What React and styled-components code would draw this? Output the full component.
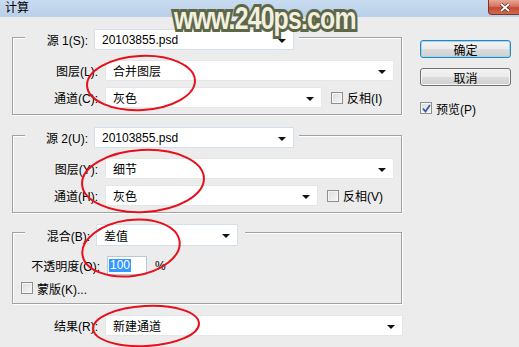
import styled, { createGlobalStyle } from 'styled-components';

const GlobalStyle = createGlobalStyle`
  html, body {
    margin: 0;
    padding: 0;
    background: #ececec;
  }
  body {
    font-family: "Liberation Sans", "Noto Sans CJK SC", sans-serif;
    font-size: 12px;
    color: #000;
  }
`;

const Window = styled.div`
  position: relative;
  width: 519px;
  height: 347px;
  overflow: hidden;
  background: #ececec;
`;

const TitleBar = styled.div`
  height: 17px;
  display: flex;
  align-items: flex-start;
  justify-content: space-between;
  background: linear-gradient(#c8dbf0, #b9cfe8);
`;

const Title = styled.div`
  padding-left: 5px;
  line-height: 17px;
  font-size: 12px;
`;

const CloseButton = styled.div`
  width: 31px;
  height: 14px;
  margin-right: -2px;
  display: flex;
  align-items: center;
  justify-content: center;
  border: 1px solid #7a3526;
  border-top: none;
  border-radius: 0 0 4px 4px;
  background: linear-gradient(#e7a793 0%, #d57461 45%, #c24a32 55%, #d06a4f 100%);
`;

const Body = styled.div`
  display: flex;
  align-items: flex-start;
  padding-left: 12px;
  gap: 17px;
`;

const LeftColumn = styled.div`
  width: 391px;
  padding-top: 20px;
  display: flex;
  flex-direction: column;
`;

const Group = styled.div`
  width: 390px;
  box-sizing: border-box;
  margin-top: ${(p) => p.$mt || 0}px;
  padding: 0 7px ${(p) => p.$pb || 6}px 0;
  border: 1px solid #a2a2a2;
  box-shadow: 1px 1px 0 #fff, inset 1px 1px 0 #fff;
  display: flex;
  flex-direction: column;
`;

const GroupHeader = styled.div`
  align-self: flex-start;
  display: flex;
  align-items: center;
  margin: -9px 0 0 12px;
  padding-right: ${(p) => p.$pr || 5}px;
  background: #ececec;
`;

const HeaderLabel = styled.span`
  width: ${(p) => p.$w}px;
  margin-right: 6px;
  text-align: right;
  white-space: nowrap;
`;

const Row = styled.div`
  display: flex;
  align-items: center;
  height: ${(p) => p.$h || 21}px;
  margin-top: ${(p) => p.$mt || 0}px;
  padding-left: ${(p) => p.$pl || 0}px;
`;

const RowLabel = styled.span`
  width: ${(p) => p.$w || 85}px;
  margin-right: 7px;
  flex-shrink: 0;
  text-align: right;
  white-space: nowrap;
`;

const SelectBox = styled.div`
  box-sizing: border-box;
  height: ${(p) => p.$h || 21}px;
  width: ${(p) => (p.$w ? `${p.$w}px` : 'auto')};
  flex: ${(p) => (p.$w ? '0 0 auto' : '1')};
  display: flex;
  align-items: center;
  justify-content: space-between;
  padding: 0 7px;
  background: #fff;
  border: 1px solid ${(p) => (p.$blue ? '#d3dfec' : '#e4e6e8')};
  border-radius: 1px;
`;

const Arrow = styled.span`
  width: 0;
  height: 0;
  margin-top: 2px;
  border-left: 4px solid transparent;
  border-right: 4px solid transparent;
  border-top: 4px solid #111;
`;

const CheckWrap = styled.label`
  display: flex;
  align-items: center;
  gap: 4px;
  margin-left: ${(p) => p.$ml || 0}px;
  white-space: nowrap;
`;

const Box = styled.span`
  box-sizing: border-box;
  width: 12px;
  height: 12px;
  display: flex;
  align-items: center;
  justify-content: center;
  border: 1px solid #8f8f8f;
  background: linear-gradient(135deg, #dcdcdc, #f7f7f7);
  box-shadow: inset 0 0 0 1px #f4f4f4;
`;

const TextInput = styled.div`
  box-sizing: border-box;
  width: 40px;
  height: 19px;
  display: flex;
  align-items: center;
  padding-left: 1px;
  background: #fff;
  border: 1px solid #b9c7d6;
`;

const Selected = styled.span`
  background: #3399ff;
  color: #fff;
  padding: 0 1px;
  line-height: 13px;
`;

const Percent = styled.span`
  margin-left: 8px;
`;

const RightColumn = styled.div`
  display: flex;
  flex-direction: column;
  margin-top: 23px;
`;

const Button = styled.div`
  box-sizing: border-box;
  width: 91px;
  height: 18px;
  margin-top: ${(p) => p.$mt || 0}px;
  display: flex;
  align-items: center;
  justify-content: center;
  border-radius: 3px;
  border: 1px solid ${(p) => (p.$primary ? '#3c7fb1' : '#707070')};
  background: linear-gradient(#f2f2f2 0%, #ebebeb 50%, #dddddd 51%, #cfcfcf 100%);
  box-shadow: inset 0 0 0 1px ${(p) => (p.$primary ? '#8fdcf9' : '#f6f6f6')};
`;

const Watermark = styled.div`
  position: absolute;
  left: 174px;
  top: 1px;
  font-family: "Liberation Sans", sans-serif;
  font-weight: bold;
  font-size: 31px;
  letter-spacing: -1px;
  color: #f3f0e0;
  -webkit-text-stroke: 6px #5d6849;
  paint-order: stroke fill;
  transform: scaleX(0.8);
  transform-origin: left top;
  white-space: nowrap;
`;

const Marks = styled.svg`
  position: absolute;
  left: 0;
  top: 0;
  pointer-events: none;
`;

function Select({ value, width, height, blue }) {
  return (
    <SelectBox $w={width} $h={height} $blue={blue}>
      <span>{value}</span>
      <Arrow />
    </SelectBox>
  );
}

function Checkbox({ label, checked, ml }) {
  return (
    <CheckWrap $ml={ml}>
      <Box>
        {checked && (
          <svg width="9" height="9" viewBox="0 0 9 9">
            <path d="M1 4.5 L3.5 7.5 L8 1" fill="none" stroke="#3d5a9e" strokeWidth="1.8" />
          </svg>
        )}
      </Box>
      <span>{label}</span>
    </CheckWrap>
  );
}

export default function App() {
  return (
    <Window>
      <GlobalStyle />
      <TitleBar>
        <Title>计算</Title>
        <CloseButton>
          <svg width="12" height="9" viewBox="0 0 12 9">
            <path d="M2 1 L10 8 M10 1 L2 8" stroke="#5a2a20" strokeWidth="3.2" />
            <path d="M2 1 L10 8 M10 1 L2 8" stroke="#fff" strokeWidth="1.8" />
          </svg>
        </CloseButton>
      </TitleBar>
      <Body>
        <LeftColumn>
          <Group>
            <GroupHeader>
              <HeaderLabel $w={63}>源 1(S):</HeaderLabel>
              <Select value="20103855.psd" width={200} blue />
            </GroupHeader>
            <Row $mt={10}>
              <RowLabel>图层(L):</RowLabel>
              <Select value="合并图层" />
            </Row>
            <Row $mt={6}>
              <RowLabel>通道(C):</RowLabel>
              <Select value="灰色" width={217} />
              <Checkbox label="反相(I)" ml={9} />
            </Row>
          </Group>

          <Group $mt={20}>
            <GroupHeader>
              <HeaderLabel $w={63}>源 2(U):</HeaderLabel>
              <Select value="20103855.psd" width={200} blue />
            </GroupHeader>
            <Row $mt={10}>
              <RowLabel>图层(Y):</RowLabel>
              <Select value="细节" />
            </Row>
            <Row $mt={6}>
              <RowLabel>通道(H):</RowLabel>
              <Select value="灰色" width={213} />
              <Checkbox label="反相(V)" ml={9} />
            </Row>
          </Group>

          <Group $mt={19} $pb={8}>
            <GroupHeader $pr={7}>
              <HeaderLabel $w={65}>混合(B):</HeaderLabel>
              <Select value="差值" width={142} height={22} blue />
            </GroupHeader>
            <Row $mt={10} $h={19}>
              <RowLabel $w={87}>不透明度(O):</RowLabel>
              <TextInput>
                <Selected>100</Selected>
              </TextInput>
              <Percent>%</Percent>
            </Row>
            <Row $mt={6} $h={14} $pl={8}>
              <Checkbox label="蒙版(K)..." />
            </Row>
          </Group>

          <Row $mt={11}>
            <RowLabel $w={86}>结果(R):</RowLabel>
            <Select value="新建通道" />
          </Row>
        </LeftColumn>

        <RightColumn>
          <Button $primary>确定</Button>
          <Button $mt={10}>取消</Button>
          <Row $mt={14} $h={16}>
            <Checkbox label="预览(P)" checked />
          </Row>
        </RightColumn>
      </Body>

      <Watermark>www.240ps.com</Watermark>

      <Marks width="519" height="347" viewBox="0 0 519 347">
        <g fill="none" stroke="#e5101c" strokeWidth="2">
          <ellipse cx="141" cy="83" rx="54" ry="27" transform="rotate(-3 141 83)" />
          <ellipse cx="143" cy="181" rx="61" ry="31" transform="rotate(-3 143 181)" />
          <ellipse cx="131" cy="248" rx="49" ry="28" transform="rotate(-8 131 248)" />
          <ellipse cx="146" cy="326" rx="53" ry="20" transform="rotate(-3 146 326)" />
        </g>
      </Marks>
    </Window>
  );
}
